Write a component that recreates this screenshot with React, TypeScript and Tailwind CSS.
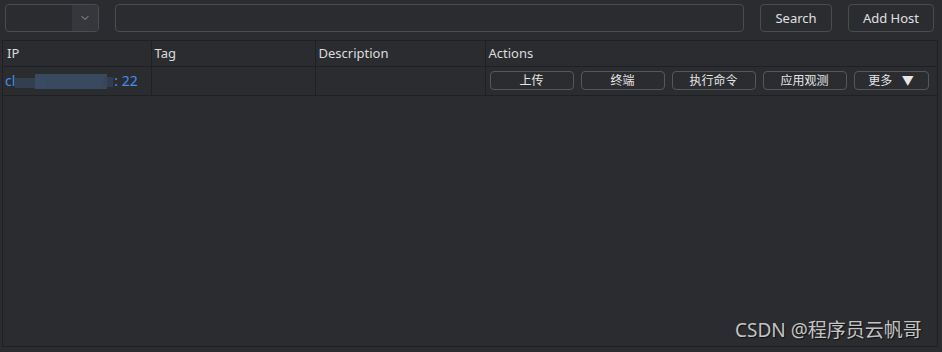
import { ChevronDown } from "lucide-react";

const actions = ["上传", "终端", "执行命令", "应用观测"];

export default function App() {
  return (
    <div
      className="w-[942px] h-[352px] bg-[#2b2c30] text-[#dcdcdc] overflow-hidden relative"
      style={{ fontFamily: '"Noto Sans", "Noto Sans CJK SC", sans-serif' }}
    >
      {/* toolbar */}
      <div className="flex items-center h-[36px] pl-[5px] pr-[8px] pt-[4px] pb-[4px]">
        <div className="flex w-[94px] h-[28px] rounded-[4px] border border-[#4b4c51] overflow-hidden">
          <div className="flex-1" />
          <div className="w-[26px] bg-[#36373c] flex items-center justify-center">
            <ChevronDown className="w-[12px] h-[12px] text-[#a0a0a0]" strokeWidth={2} />
          </div>
        </div>
        <div className="ml-[16px] w-[629px] h-[28px] rounded-[4px] border border-[#4b4c51]" />
        <button className="ml-[16px] w-[72px] h-[28px] pt-[1px] rounded-[4px] border border-[#4b4c51] text-[13px] text-[#e0e0e0]">
          Search
        </button>
        <button className="ml-[16px] w-[86px] h-[28px] pt-[1px] rounded-[4px] border border-[#4b4c51] text-[13px] text-[#e0e0e0]">
          Add Host
        </button>
      </div>

      {/* table */}
      <div className="mt-[4px] ml-[2px] w-[936px] h-[307px] border border-[#1f2023]">
        <table className="w-full table-fixed border-collapse text-[13px]">
          <colgroup>
            <col className="w-[148px]" />
            <col className="w-[164px]" />
            <col className="w-[170px]" />
            <col />
          </colgroup>
          <thead>
            <tr className="h-[25px] border-b border-[#1f2023]">
              <th className="font-normal text-left pl-[4px] border-r border-[#1f2023]">IP</th>
              <th className="font-normal text-left pl-[3px] border-r border-[#1f2023]">Tag</th>
              <th className="font-normal text-left pl-[3px] border-r border-[#1f2023]">Description</th>
              <th className="font-normal text-left pl-[3px]">Actions</th>
            </tr>
          </thead>
          <tbody>
            <tr className="h-[29px] border-b border-[#1f2023]">
              <td className="pl-[2px] border-r border-[#1f2023]">
                <div className="flex items-center text-[#3f8ff0] text-[14px]">
                  <span>cl</span>
                  <span className="relative w-[96px] h-[20px]">
                    <span className="absolute left-0 top-[7px] w-[30px] h-[10px] bg-[#364558] opacity-80" />
                    <span className="absolute left-[20px] top-[3px] w-[72px] h-[15px] bg-[#3b4d66] opacity-90" />
                    <span className="absolute left-[88px] top-[6px] w-[10px] h-[10px] bg-[#36465c] opacity-70" />
                  </span>
                  <span className="ml-[3px]">: 22</span>
                </div>
              </td>
              <td className="border-r border-[#1f2023]" />
              <td className="border-r border-[#1f2023]" />
              <td className="pl-[4px]">
                <div className="flex gap-[7px]">
                  {actions.map((a) => (
                    <button
                      key={a}
                      className="w-[84px] h-[19px] rounded-[4px] border border-[#56575c] text-[12px] leading-none text-[#e6e6e6]"
                    >
                      {a}
                    </button>
                  ))}
                  <button className="w-[75px] h-[19px] rounded-[4px] border border-[#56575c] text-[12px] leading-none text-[#e6e6e6]">
                    更多&nbsp;&nbsp;&nbsp;▼
                  </button>
                </div>
              </td>
            </tr>
          </tbody>
        </table>
      </div>

      {/* watermark */}
      <div
        className="absolute left-[735px] top-[316px] text-[19px] text-[#c4c4c4]"
        style={{ textShadow: "1px 1px 1px #111" }}
      >
        CSDN @程序员云帆哥
      </div>
    </div>
  );
}
